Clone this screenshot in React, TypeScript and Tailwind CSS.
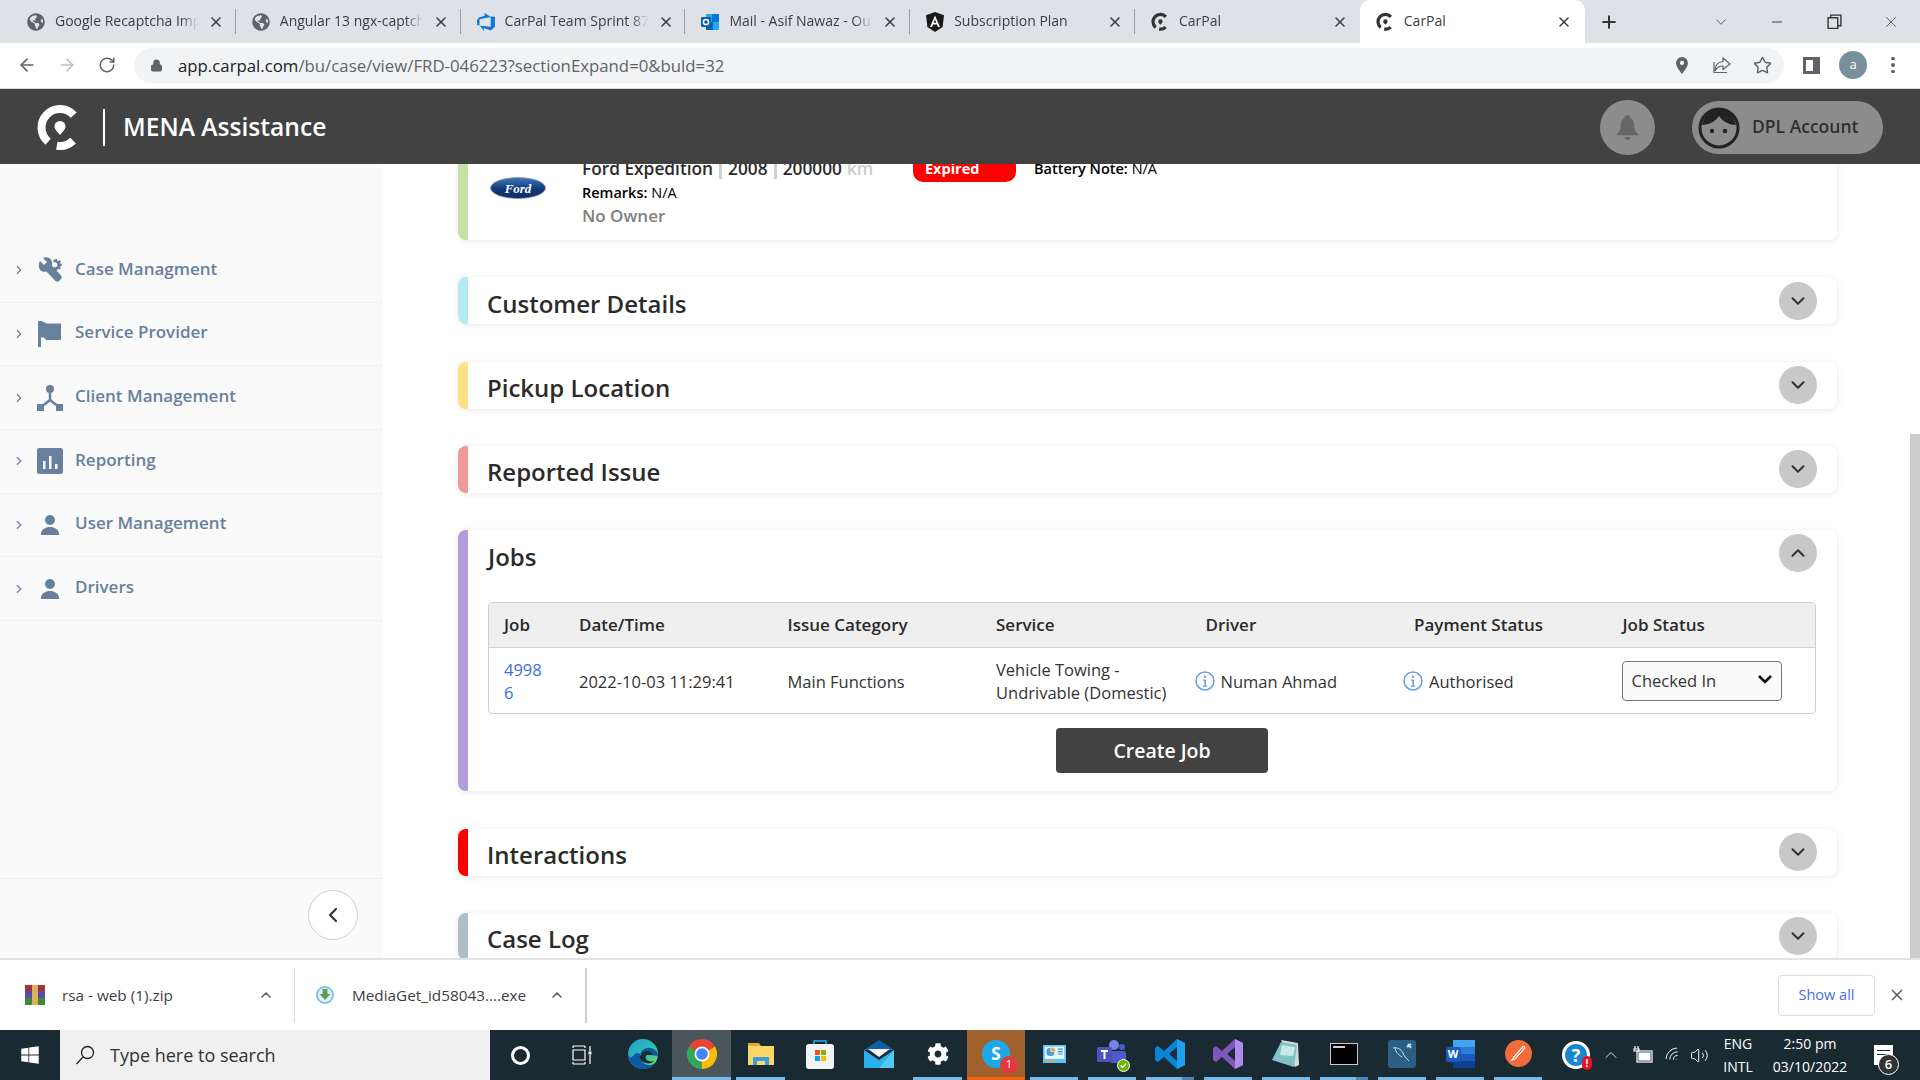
import React from "react";
import {
  ArrowLeft,
  ArrowRight,
  RotateCw,
  Lock,
  Star,
  X,
  Plus,
  ChevronDown,
  ChevronUp,
  ChevronRight,
  ChevronLeft,
  Minus,
  Wifi,
  Volume2,
} from "lucide-react";
import { FaGlobeAmericas, FaWindows, FaCog } from "react-icons/fa";

const CarpalLogo = ({ color, className }: { color: string; className: string }) => (
  <svg viewBox="14 10 50 54" className={className} fill="none">
    <path d="M53.7 24.1A18.5 18.5 0 1 0 28.1 50.7" stroke={color} strokeWidth="8" />
    <path d="M36.8 54.7A18.5 18.5 0 0 0 53.1 49.6" stroke={color} strokeWidth="8" />
    <path
      d="M40 30a5.5 5.5 0 0 1 5.5 5.5c0 3-3.5 6-5.5 8.5c-2-2.5-5.5-5.5-5.5-8.5a5.5 5.5 0 0 1 5.5-5.5z"
      fill={color}
    />
  </svg>
);

const Globe = () => <FaGlobeAmericas className="h-[18px] w-[18px] text-[#5f6368]" />;

const DevopsIcon = () => (
  <svg viewBox="0 0 19 19" className="h-[22px] w-[20px]">
    <path
      d="M18 4.500V14l-4 3.500-6.500-2.300V18L3.800 13.100l10.200.800V4.200zM14 4.700 8.200 1v2.500L2.800 5.200 1 7.500v4.600l2.300 1V6.800z"
      fill="#0f78d4"
    />
  </svg>
);

const OutlookIcon = () => (
  <svg viewBox="0 0 20 20" className="h-[20px] w-[20px]">
    <rect x="6" y="2" width="13" height="16" rx="1" fill="#28a8ea" />
    <rect x="12" y="2" width="7" height="8" fill="#0078d4" />
    <rect x="6" y="10" width="7" height="8" fill="#0364b8" />
    <rect x="1" y="5" width="10" height="10" rx="1" fill="#0f5fae" />
    <circle cx="6" cy="10" r="2.600" fill="none" stroke="#fff" strokeWidth="1.500" />
  </svg>
);

const AngularIcon = () => (
  <svg viewBox="0 0 20 20" className="h-[20px] w-[20px]">
    <path d="M10 0 19 3.300 17.600 15 10 20 2.400 15 1 3.300z" fill="#1a1a1a" />
    <path d="M10 3.500 5 15h2l1-2.600h4l1 2.600h2zM8.700 10.800 10 7.500l1.300 3.300z" fill="#fff" />
  </svg>
);

const tabs = [
  { title: "Google Recaptcha Implementation", icon: <Globe /> },
  { title: "Angular 13 ngx-captcha example", icon: <Globe /> },
  { title: "CarPal Team Sprint 87 Board", icon: <DevopsIcon /> },
  { title: "Mail - Asif Nawaz - Outlook", icon: <OutlookIcon /> },
  { title: "Subscription Plan", icon: <AngularIcon /> },
  { title: "CarPal", icon: <CarpalLogo color="#333333" className="h-[22px] w-[20px]" /> },
];

const TabStrip = () => (
  <div className="flex h-[43px] shrink-0 bg-[#dee1e6] pl-[11px] text-[14px] text-[#3c4043]">
    {tabs.map((tab, i) => (
      <div key={tab.title} className="flex h-full w-[224.800px] items-center pl-[15px]">
        <span className="flex w-[20px] shrink-0 items-center justify-center">{tab.icon}</span>
        <span className="mb-[2px] ml-[9px] w-[143px] overflow-hidden whitespace-nowrap [mask-image:linear-gradient(to_right,black_88%,transparent)]">
          {tab.title}
        </span>
        <X className="ml-[10px] h-[16px] w-[16px] shrink-0 text-[#3c4043]" strokeWidth={2.4} />
        {i < 5 && <span className="ml-auto h-[25px] w-px bg-[#9aa0a6]" />}
      </div>
    ))}
    <div className="flex h-full w-[225px] items-center rounded-t-[10px] bg-white pl-[15px]">
      <span className="flex w-[20px] shrink-0 items-center justify-center">
        <CarpalLogo color="#333333" className="h-[22px] w-[20px]" />
      </span>
      <span className="mb-[2px] ml-[9px] w-[143px]">CarPal</span>
      <X className="ml-[9px] h-[16px] w-[16px] shrink-0 text-[#3c4043]" strokeWidth={2.4} />
    </div>
    <Plus className="ml-[14px] mt-[12px] h-[20px] w-[20px] text-[#333]" strokeWidth={2.4} />
    <div className="flex flex-1 items-center justify-end text-[#333]">
      <ChevronDown className="h-[18px] w-[18px]" strokeWidth={1} />
      <Minus className="ml-[39px] h-[16px] w-[16px]" strokeWidth={1.4} />
      <svg viewBox="0 0 14 14" className="ml-[42px] h-[15px] w-[15px]" fill="none" stroke="#333" strokeWidth="1.300">
        <rect x="1" y="3.500" width="9" height="10" />
        <path d="M3.500 3.500V1H13V11H10" />
      </svg>
      <X className="ml-[40px] mr-[20px] h-[18px] w-[18px]" strokeWidth={1} />
    </div>
  </div>
);

const Toolbar = () => (
  <div className="flex h-[46px] shrink-0 items-center border-b border-[#dadce0] bg-white pb-px">
    <ArrowLeft className="ml-[17px] h-[20px] w-[20px] text-[#5f6368]" />
    <ArrowRight className="ml-[20px] h-[20px] w-[20px] text-[#bcbfc3]" />
    <RotateCw className="ml-[21px] h-[18px] w-[18px] text-[#5f6368]" />
    <div className="ml-[18px] flex h-[35px] w-[1650px] items-center rounded-full bg-[#f1f3f4] pl-[16px]">
      <Lock className="h-[13px] w-[13px] fill-[#5f6368] text-[#5f6368]" />
      <span className="ml-[15px] pt-[1px] text-[16.800px] text-[#5f6368]">
        <span className="text-[#202124]">app.carpal.com</span>/bu/case/view/FRD-046223?sectionExpand=0&amp;buld=32
      </span>
      <svg viewBox="0 0 14 20" className="ml-auto h-[17px] w-[12px]">
        <path d="M7 0a7 7 0 0 1 7 7c0 4-4 9-7 13C4 16 0 11 0 7a7 7 0 0 1 7-7z" fill="#5f6368" />
        <circle cx="7" cy="7" r="2.500" fill="#f1f3f4" />
      </svg>
      <svg viewBox="0 0 20 20" className="ml-[24px] h-[20px] w-[20px]" fill="none" stroke="#5f6368" strokeWidth="1.200">
        <path d="M11 3l7 6-7 5.500v-3.500c-4 0-6 1-8 5 0-6 3-9 8-9.500z" />
        <path d="M2 7v10.500h13" />
      </svg>
      <Star className="ml-[21px] mr-[12px] h-[19px] w-[19px] text-[#5f6368]" strokeWidth={1.800} />
    </div>
    <span className="ml-[19px] flex h-[17px] w-[17px] justify-start border-[3px] border-[#5f6368] border-r-[7px]" />
    <span className="ml-[19px] flex h-[28px] w-[28px] items-center justify-center rounded-full bg-[#78909c] text-[13px] text-white">
      a
    </span>
    <span className="ml-[24px] flex flex-col gap-[3px]">
      <span className="h-[3.500px] w-[3.500px] rounded-full bg-[#5f6368]" />
      <span className="h-[3.500px] w-[3.500px] rounded-full bg-[#5f6368]" />
      <span className="h-[3.500px] w-[3.500px] rounded-full bg-[#5f6368]" />
    </span>
  </div>
);

const AppHeader = () => (
  <header className="flex h-[75px] shrink-0 items-center bg-[#424242] pl-[34px] pt-[2px]">
    <CarpalLogo color="#ffffff" className="h-[54px] w-[50px]" />
    <span className="ml-[19px] h-[37px] w-[2px] bg-white" />
    <span className="ml-[18px] text-[24.600px] font-semibold text-white">MENA Assistance</span>
    <span className="ml-auto flex h-[55px] w-[55px] items-center justify-center rounded-full bg-[#8c8c8c]">
      <svg viewBox="0 0 26 28" className="h-[27px] w-[25px]" fill="#666666">
        <path d="M13 1c2 0 3 1.500 3 3 3 1.500 4 4 4 8 0 4 1 7 4 8.500v1.500H2v-1.500c3-1.500 4-4.500 4-8.500 0-4 1-6.500 4-8 0-1.500 1-3 3-3z" />
        <path d="M10 24h6c0 2-1.500 3-3 3s-3-1-3-3z" />
      </svg>
    </span>
    <div className="ml-[37px] mr-[37px] flex h-[53px] w-[191px] items-center rounded-full bg-[#8c8c8c] pl-[6px]">
      <svg viewBox="0 0 42 42" className="h-[42px] w-[42px]">
        <circle cx="21" cy="21" r="19" fill="#8c8c8c" stroke="#222" strokeWidth="3" />
        <path d="M4 18C7 6 14 2 21 2s14 4 17 16c-6 0-13-3-17-9-3 5-10 9-17 9z" fill="#222" />
        <circle cx="14" cy="24" r="2.200" fill="#222" />
        <circle cx="27" cy="24" r="2.200" fill="#222" />
      </svg>
      <span className="mb-[2px] ml-[12px] text-[17.500px] font-semibold text-[#2f2f2f]">DPL Account</span>
    </div>
  </header>
);

const navIconClass = "h-[26px] w-[26px] text-[#67809c]";

const navItems = [
  {
    label: "Case Managment",
    icon: (
      <svg viewBox="0 0 26 26" className={navIconClass} fill="currentColor">
        <path d="M3 4l4 4 3-3-4-4c3-1.500 7-.500 8.500 2.500 1 2 .800 3.500.300 5L24 18.500c1 1 1 2.500 0 3.500l-2 2c-1 1-2.500 1-3.500 0L9.500 14.500C8 15 6 15 4.500 14 1.500 12.500 1 7 3 4z" />
        <path d="M19 2l1 .100.300 1.400 1 .400 1.200-.700 1.300 1.300-.700 1.200.400 1 1.400.300v1.800l-1.400.300-.400 1 .700 1.200-1.300 1.300-1.200-.700-1 .400-.300 1.400h-1l-2.500-2.500 .900-1.200c1.500.500 3-.500 3-2.300s-1.700-2.800-3.200-2.200l-1-1 .300-.400-.200-1.200z" />
      </svg>
    ),
  },
  {
    label: "Service Provider",
    icon: (
      <svg viewBox="0 0 26 26" className={navIconClass} fill="currentColor">
        <path d="M1 0h3.500l5 2.500H24V19H9l-2-2.500H4V26H1z" />
      </svg>
    ),
  },
  {
    label: "Client Management",
    icon: (
      <svg viewBox="0 0 26 26" className={navIconClass} fill="currentColor">
        <circle cx="13" cy="4" r="4" />
        <rect x="0" y="19" width="7" height="7" />
        <rect x="19" y="19" width="7" height="7" />
        <path d="M13 8v7M13 15 4 22M13 15l9 7" stroke="currentColor" strokeWidth="2.500" fill="none" />
      </svg>
    ),
  },
  {
    label: "Reporting",
    icon: (
      <svg viewBox="0 0 26 26" className={navIconClass}>
        <rect width="26" height="26" rx="2.500" fill="currentColor" />
        <path d="M6 13h2.500v8H6zM12 8h2.500v13H12zM18 16h2.500v5H18z" fill="#fafafa" />
      </svg>
    ),
  },
  {
    label: "User Management",
    icon: (
      <svg viewBox="0 0 26 26" className={navIconClass} fill="currentColor">
        <circle cx="13" cy="8" r="5" />
        <path d="M4 22c0-5 5-7 9-7s9 2 9 7v1H4z" />
      </svg>
    ),
  },
  {
    label: "Drivers",
    icon: (
      <svg viewBox="0 0 26 26" className={navIconClass} fill="currentColor">
        <circle cx="13" cy="8" r="5" />
        <path d="M4 22c0-5 5-7 9-7s9 2 9 7v1H4z" />
      </svg>
    ),
  },
];

const Sidebar = () => (
  <aside className="flex h-full w-[383px] shrink-0 flex-col bg-[#fafafa] pt-[75px]">
    <nav>
      {navItems.map((item) => (
        <div key={item.label} className="flex h-[63.700px] items-center border-b border-[#f2f2f2] pl-[12px]">
          <ChevronRight className="h-[14px] w-[14px] text-[#67809c]" />
          <span className="ml-[11px]">{item.icon}</span>
          <span className="mb-[4px] ml-[12px] text-[17px] font-semibold text-[#67809c]">{item.label}</span>
        </div>
      ))}
    </nav>
    <div className="mt-auto flex h-[80px] items-start justify-end border-t border-[#efefef] pr-[25px] pt-[11px]">
      <span className="flex h-[50px] w-[50px] items-center justify-center rounded-full border border-[#cfcfcf] bg-white">
        <ChevronLeft className="h-[24px] w-[24px] text-[#333]" strokeWidth={2.200} />
      </span>
    </div>
  </aside>
);

const CollapseToggle = ({ open }: { open?: boolean }) => (
  <span className="flex h-[38px] w-[38px] shrink-0 items-center justify-center rounded-full bg-[#c8c8c8]">
    {open ? (
      <ChevronUp className="h-[22px] w-[22px] text-[#333]" strokeWidth={2.200} />
    ) : (
      <ChevronDown className="h-[22px] w-[22px] text-[#333]" strokeWidth={2.200} />
    )}
  </span>
);

const cardClass = "rounded-lg border-l-[10px] bg-white shadow-[0_1px_7px_rgba(0,0,0,0.09)]";

const SectionCard = ({ title, accent }: { title: string; accent: string }) => (
  <section className={`${cardClass} ${accent} flex h-[47px] shrink-0 items-center justify-between pl-[19px] pr-[20px]`}>
    <h2 className="mt-[6px] text-[24px] font-semibold leading-none text-[#2b2b2b]">{title}</h2>
    <CollapseToggle />
  </section>
);

const VehicleCard = () => (
  <section className={`${cardClass} flex h-[116px] shrink-0 border-[#c5e1a5] pl-[22px]`}>
    <svg viewBox="0 0 56 22" className="mt-[53px] h-[22px] w-[56px] shrink-0">
      <defs>
        <linearGradient id="fordBlue" x1="0" y1="0" x2="0" y2="1">
          <stop offset="0" stopColor="#3f78b8" />
          <stop offset="0.55" stopColor="#123a7c" />
          <stop offset="1" stopColor="#0d2b5e" />
        </linearGradient>
      </defs>
      <ellipse cx="28" cy="11" rx="27.500" ry="10.500" fill="url(#fordBlue)" stroke="#8b9bb4" strokeWidth="0.800" />
      <text x="28" y="15.500" textAnchor="middle" fontFamily="'Liberation Serif',serif" fontStyle="italic" fontWeight="700" fontSize="13" fill="#ffffff">
        Ford
      </text>
    </svg>
    <div className="ml-[36px] pt-[33px]">
      <div className="flex h-[24px] items-center">
        <span className="flex w-[331px] items-center text-[17.300px] font-semibold text-[#2b2b2b]">
          Ford Expedition
          <span className="mx-[6px] h-[20px] w-[3px] bg-[#d0d0d0]" />
          2008
          <span className="mx-[6px] h-[20px] w-[3px] bg-[#d0d0d0]" />
          200000
          <span className="ml-[5px] text-[#cccccc]">km</span>
        </span>
        <span className="flex h-[26px] w-[103px] items-center rounded-[10px] bg-[#ff0000] pl-[12px] text-[14.500px] font-bold text-white">
          Expired
        </span>
        <span className="ml-[18px] text-[14.500px] font-semibold text-black">
          Battery Note: <span className="font-normal">N/A</span>
        </span>
      </div>
      <div className="flex h-[23px] items-center text-[14.500px] font-semibold text-black">
        Remarks:&nbsp;<span className="font-normal">N/A</span>
      </div>
      <div className="flex h-[24px] items-center text-[17px] font-semibold text-[#808080]">No Owner</div>
    </div>
  </section>
);

const InfoDot = () => (
  <svg viewBox="0 0 20 20" className="h-[20px] w-[20px] shrink-0">
    <circle cx="10" cy="10" r="9" fill="none" stroke="#6a9fe8" strokeWidth="1.500" />
    <circle cx="10" cy="5.800" r="1.200" fill="#6a9fe8" />
    <path d="M8 8.500h3v6h1.300v1.200H7.800v-1.200H9.300v-4.800H8z" fill="#6a9fe8" />
  </svg>
);

const jobColumns = ["Job", "Date/Time", "Issue Category", "Service", "Driver", "Payment Status", "Job Status"];

const JobsCard = () => (
  <section className={`${cardClass} h-[261px] shrink-0 border-[#b39ddb] pl-[20px] pr-[21px]`}>
    <div className="flex h-[72px] items-start justify-between">
      <h2 className="mt-[12px] text-[24px] font-semibold leading-[30px] text-[#2b2b2b]">Jobs</h2>
      <span className="mr-[-1px] mt-[4px]">
        <CollapseToggle open />
      </span>
    </div>
    <div className="overflow-hidden rounded-[4px] border border-[#cfcfcf]">
      <table className="w-full table-fixed text-[16.500px] text-[#333]">
        <colgroup>
          <col className="w-[75px]" />
        </colgroup>
        <thead>
          <tr className="h-[44px] border-b border-[#cfcfcf] bg-[#efefef]">
            {jobColumns.map((col, i) => (
              <th key={col} className={`${i < 4 ? "pl-[15px]" : "pl-[16px]"} text-left text-[17px] font-semibold text-[#2b2b2b]`}>
                {col}
              </th>
            ))}
          </tr>
        </thead>
        <tbody>
          <tr className="h-[66px] leading-[23px]">
            <td className="break-all pl-[15px] pr-[15px] pt-[1px] text-[#3b6fd8]">49986</td>
            <td className="pl-[15px] pt-[1px]">2022-10-03 11:29:41</td>
            <td className="pl-[15px] pt-[1px]">Main Functions</td>
            <td className="pl-[15px] pr-[2px] pt-[1px]">Vehicle Towing - Undrivable (Domestic)</td>
            <td className="pl-[5px] pt-[1px]">
              <span className="flex items-center gap-[6px]">
                <InfoDot />
                Numan Ahmad
              </span>
            </td>
            <td className="pl-[5px] pt-[1px]">
              <span className="flex items-center gap-[6px]">
                <InfoDot />
                Authorised
              </span>
            </td>
            <td className="pl-[15px]">
              <span className="flex h-[40px] w-[160px] items-center justify-between rounded-[4px] border border-[#767676] bg-[#fafafa] pl-[9px] pr-[9px]">
                Checked In
                <svg viewBox="0 0 14 9" className="mb-[3px] h-[9px] w-[14px]" fill="none" stroke="#111" strokeWidth="2.600">
                  <path d="M1 1l6 6 6-6" />
                </svg>
              </span>
            </td>
          </tr>
        </tbody>
      </table>
    </div>
    <button className="ml-[568px] mt-[14px] flex h-[45px] w-[212px] items-center justify-center rounded-[4px] bg-[#424242] text-[19.500px] font-semibold text-white">
      Create Job
    </button>
  </section>
);

const MainPanel = () => (
  <main className="flex h-full flex-1 overflow-hidden">
    <div className="-mt-[40px] flex w-[1527px] flex-col gap-[37.330px] pl-[75px] pr-[73px]">
      <VehicleCard />
      <SectionCard title="Customer Details" accent="border-[#b2ebf2]" />
      <SectionCard title="Pickup Location" accent="border-[#ffe082]" />
      <SectionCard title="Reported Issue" accent="border-[#ef9a9a]" />
      <JobsCard />
      <SectionCard title="Interactions" accent="border-[#ff0000]" />
      <SectionCard title="Case Log" accent="border-[#b0bec5]" />
    </div>
    <div className="w-[10px] pt-[270px]">
      <div className="h-full bg-[#cdcdcd]" />
    </div>
  </main>
);

const DownloadBar = () => (
  <div className="flex h-[72px] shrink-0 items-center border-t-2 border-[#e3e3e3] bg-white text-[15.300px] text-[#3c4043]">
    <div className="flex h-[55px] w-[295px] items-center border-r border-[#dadce0] pl-[25px]">
      <svg viewBox="0 0 20 20" className="h-[20px] w-[20px]">
        <rect x="0" y="0" width="20" height="6" fill="#a5303d" />
        <rect x="0" y="6" width="20" height="7" fill="#5d4aa8" />
        <rect x="0" y="13" width="20" height="7" fill="#3d8a3d" />
        <rect x="7" y="0" width="6" height="20" fill="#d9b25a" />
      </svg>
      <span className="ml-[17px] w-[196px]">rsa - web (1).zip</span>
      <ChevronUp className="h-[16px] w-[16px] text-[#5f6368]" strokeWidth={2.400} />
    </div>
    <div className="flex h-[55px] w-[292px] items-center border-r-2 border-[#cfcfcf] pl-[20px]">
      <svg viewBox="0 0 20 20" className="h-[20px] w-[20px]">
        <circle cx="10" cy="10" r="8" fill="#e8f4fb" stroke="#7ec4ea" strokeWidth="2" />
        <path d="M7.500 4h5v5h3l-5.500 6-5.500-6h3z" fill="#5f9e4a" />
      </svg>
      <span className="ml-[17px] w-[197px] whitespace-nowrap">MediaGet_id58043....exe</span>
      <ChevronUp className="h-[16px] w-[16px] text-[#5f6368]" strokeWidth={2.400} />
    </div>
    <span className="ml-auto flex h-[41px] w-[97px] items-center justify-center rounded-[4px] border border-[#dadce0] text-[14.500px] text-[#4a6ee0]">
      Show all
    </span>
    <X className="ml-[13px] mr-[14px] h-[18px] w-[18px] text-[#5f6368]" strokeWidth={2.200} />
  </div>
);

type Slot = { key: string; bar?: "on" | "double"; tint?: string; node: React.ReactNode };

const taskSlots: Slot[] = [
  {
    key: "edge",
    node: (
      <svg viewBox="0 0 30 30" className="h-[30px] w-[30px]">
        <defs>
          <linearGradient id="edgeA" x1="0" y1="0" x2="1" y2="1">
            <stop offset="0" stopColor="#1b9de2" />
            <stop offset="0.6" stopColor="#35c1a5" />
            <stop offset="1" stopColor="#7fdc5e" />
          </linearGradient>
        </defs>
        <circle cx="15" cy="15" r="15" fill="url(#edgeA)" />
        <path d="M30 17c0-5-5-9-11-8-4 .600-7 4-7 8 0 5 4 9 9 9 2 0 4-.500 6-2-3 4-7 6-12 6-8 0-15-7-15-15 3 7 5 1 8-1" fill="#0c59a4" />
        <path d="M12 17c1-3 4-5 7-5 3 0 5 1.500 6 4l-6 0c-1 .500-2 2-1 4 1 2 5 3 8 2-2 2-5 3-8 2-4-1-7-4-6-7z" fill="#1b2a33" />
      </svg>
    ),
  },
  {
    key: "chrome",
    bar: "on",
    tint: "bg-[#4a555c]",
    node: (
      <svg viewBox="0 0 30 30" className="h-[30px] w-[30px]">
        <path d="M15 15L2 7.500A15 15 0 0 1 28 7.500Z" fill="#ea4335" />
        <path d="M15 15L28 7.500A15 15 0 0 1 15 30Z" fill="#fbbc04" />
        <path d="M15 15L15 30A15 15 0 0 1 2 7.500Z" fill="#34a853" />
        <circle cx="15" cy="15" r="7.500" fill="#fff" />
        <circle cx="15" cy="15" r="5.800" fill="#4285f4" />
      </svg>
    ),
  },
  {
    key: "explorer",
    bar: "on",
    node: (
      <svg viewBox="0 0 28 24" className="h-[24px] w-[28px]">
        <path d="M1 1h11l2 3h13v19H1z" fill="#e0a92f" />
        <rect x="1" y="4" width="26" height="19" fill="#fbd768" />
        <path d="M6 23v-8h16v8h-4v-4h-8v4z" fill="#3d9be0" />
      </svg>
    ),
  },
  {
    key: "store",
    node: (
      <svg viewBox="0 0 28 30" className="h-[30px] w-[28px]">
        <path d="M8 6V2h12v4" fill="none" stroke="#29a9ea" strokeWidth="1.600" />
        <rect x="0" y="5" width="28" height="25" rx="3" fill="#f3f3f3" />
        <rect x="9" y="11" width="5" height="5" fill="#f25022" />
        <rect x="15" y="11" width="5" height="5" fill="#7fba00" />
        <rect x="9" y="17" width="5" height="5" fill="#00a4ef" />
        <rect x="15" y="17" width="5" height="5" fill="#ffb900" />
      </svg>
    ),
  },
  {
    key: "mail",
    node: (
      <svg viewBox="0 0 30 28" className="h-[28px] w-[30px]">
        <path d="M15 0 30 10H0z" fill="#0f5ea8" />
        <path d="M4 9h22l-11 8z" fill="#f4f4f4" />
        <path d="M0 10l15 10 15-10v18H0z" fill="#29b1ee" />
        <path d="M30 10v18H15z" fill="#52c8f5" />
      </svg>
    ),
  },
  {
    key: "settings",
    bar: "on",
    node: <FaCog className="h-[22px] w-[22px] text-white" />,
  },
  {
    key: "skype",
    tint: "bg-[#a0622d]",
    node: (
      <span className="relative flex h-[28px] w-[28px] items-center justify-center rounded-full bg-[#1fa8e8] text-[17px] font-bold text-white">
        S
        <span className="absolute -bottom-[6px] -right-[8px] flex h-[18px] w-[18px] items-center justify-center rounded-full bg-[#e5383b] text-[11px] font-normal">
          1
        </span>
      </span>
    ),
  },
  {
    key: "control",
    bar: "on",
    node: (
      <svg viewBox="0 0 28 22" className="h-[18px] w-[27px]">
        <rect width="28" height="22" fill="#5cc5f2" />
        <rect x="2" y="2" width="24" height="15" fill="#e8f6fd" />
        <path d="M9 3.500a5 5 0 1 0 5 5H9z" fill="#4b9ad6" />
        <path d="M10 3a5 5 0 0 1 5 5h-5z" fill="#f0a92f" />
        <path d="M18 5h6M18 8h6M18 11h6" stroke="#2f86c9" strokeWidth="1.500" />
        <rect x="3" y="18.500" width="12" height="1.500" fill="#f0a92f" />
      </svg>
    ),
  },
  {
    key: "teams",
    bar: "on",
    node: (
      <span className="relative flex h-[26px] w-[30px] items-center">
        <svg viewBox="0 0 30 28" className="h-[28px] w-[30px]">
          <circle cx="17" cy="5" r="5" fill="#7b83eb" />
          <circle cx="25" cy="7" r="3" fill="#5059c9" />
          <rect x="13" y="11" width="16" height="12" rx="2" fill="#5059c9" />
          <rect x="0" y="7" width="15" height="15" rx="1.500" fill="#4b53bc" />
          <path d="M4 10h7v2H8.500v7h-2v-7H4z" fill="#fff" />
        </svg>
        <span className="absolute -bottom-[5px] -right-[3px] flex h-[13px] w-[13px] items-center justify-center rounded-full border border-white bg-[#6bb700]">
          <svg viewBox="0 0 10 10" className="h-[9px] w-[9px]" fill="none" stroke="#fff" strokeWidth="1.800">
            <path d="M2 5l2 2 4-4" />
          </svg>
        </span>
      </span>
    ),
  },
  {
    key: "vscode",
    bar: "double",
    node: (
      <svg viewBox="0 0 30 30" className="h-[30px] w-[30px]">
        <path d="M22 0l8 4v22l-8 4L9 18l-6 5-3-2V9l3-2 6 5z" fill="#0a84d6" />
        <path d="M22 0l8 4v22l-8 4z" fill="#1fa0ec" />
        <path d="M22 8l-8 7 8 7z" fill="#1b2a33" />
      </svg>
    ),
  },
  {
    key: "vstudio",
    bar: "on",
    node: (
      <svg viewBox="0 0 30 30" className="h-[30px] w-[30px]">
        <path d="M22 0l8 4v22l-8 4L9 18l-6 5-3-2V9l3-2 6 5z" fill="#7e57b8" />
        <path d="M22 0l8 4v22l-8 4z" fill="#b18bea" />
        <path d="M22 8l-8 7 8 7z" fill="#1b2a33" />
      </svg>
    ),
  },
  {
    key: "notepad",
    bar: "on",
    node: (
      <svg viewBox="0 0 28 28" className="h-[28px] w-[28px]">
        <path d="M9 0 26 3l1 22-4 2z" fill="#d9d9d9" />
        <path d="M9 2 25 5l-3 22L0 20z" fill="#7fc3c9" />
        <path d="M10 5 23 7l-2 9-13-1z" fill="#c9e8ea" />
      </svg>
    ),
  },
  {
    key: "cmd",
    bar: "double",
    node: (
      <span className="flex h-[22px] w-[28px] flex-col border border-[#c9c9c9] bg-black">
        <span className="ml-[2px] mt-[2px] h-[2px] w-[12px] bg-[#cfcfcf]" />
      </span>
    ),
  },
  {
    key: "mysql",
    bar: "on",
    node: (
      <span className="flex h-[28px] w-[28px] items-center justify-center rounded-[3px] bg-[#2c5f85]">
        <svg viewBox="0 0 24 24" className="h-[24px] w-[24px]" fill="none" stroke="#cfe0ec" strokeWidth="1">
          <path d="M3 6c4-1 8 1 10 5 1 3 3 5 6 8M5 6c1 5 4 7 7 9" />
          <path d="M17 5l4-3M18 2l3 4" strokeWidth="2" />
        </svg>
      </span>
    ),
  },
  {
    key: "word",
    bar: "on",
    node: (
      <span className="relative flex h-[28px] w-[29px] justify-end">
        <span className="flex w-[22px] flex-col">
          <span className="h-[7px] bg-[#41a5ee]" />
          <span className="h-[7px] bg-[#2b7cd3]" />
          <span className="h-[7px] bg-[#185abd]" />
          <span className="h-[7px] bg-[#103f91]" />
        </span>
        <span className="absolute left-0 top-[7px] flex h-[15px] w-[15px] items-center justify-center rounded-[2px] bg-[#185abd] text-[11px] font-bold text-white">
          W
        </span>
      </span>
    ),
  },
  {
    key: "pen",
    bar: "on",
    node: (
      <svg viewBox="0 0 28 28" className="h-[27px] w-[27px]">
        <circle cx="14" cy="14" r="14" fill="#f26b3a" />
        <path d="M7 21l3-1 10-11c1-1 0-3-1.500-2L9 18z" fill="none" stroke="#fff" strokeWidth="1.200" />
      </svg>
    ),
  },
];

const Taskbar = () => (
  <div className="flex h-[50px] shrink-0 items-stretch bg-[#1a2a33] text-white">
    <div className="flex w-[60px] items-center justify-center">
      <FaWindows className="h-[20px] w-[20px]" />
    </div>
    <div className="flex w-[430px] items-center bg-[#f0f0f0] pl-[15px] text-[18px] text-[#333]">
      <svg viewBox="0 0 20 20" className="h-[20px] w-[20px]" fill="none" stroke="#222" strokeWidth="1.300">
        <circle cx="12.500" cy="7.500" r="6" />
        <path d="M8 12l-6.500 7" />
      </svg>
      <span className="ml-[15px]">Type here to search</span>
    </div>
    <div className="flex w-[60px] items-center justify-center">
      <span className="h-[19px] w-[19px] rounded-full border-[3px] border-white" />
    </div>
    <div className="flex w-[63px] items-center justify-center">
      <svg viewBox="0 0 20 20" className="h-[20px] w-[20px]" fill="none" stroke="#fff" strokeWidth="1.200">
        <path d="M1 1h12M1 19h12M1 5h12v10H1zM1 1v2M13 1v2M1 17v2M13 17v2M18 1v5M18 10v9" />
        <rect x="16.500" y="6.500" width="3" height="3" fill="#fff" stroke="none" />
      </svg>
    </div>
    {taskSlots.map((slot, i) => (
      <div key={slot.key} className={`flex ${i < 6 ? "w-[59px]" : "w-[58px]"} flex-col ${slot.tint ?? ""}`}>
        <div className="flex flex-1 items-center justify-center">{slot.node}</div>
        {slot.key === "skype" ? (
          <div className="h-[3px] bg-[#f7630c]" />
        ) : slot.key === "chrome" ? (
          <div className="h-[3px] bg-[#76b9ed]" />
        ) : slot.bar === "double" ? (
          <div className="mx-[5px] flex h-[3px]">
            <span className="w-[36px] bg-[#76b9ed]" />
            <span className="flex-1 bg-[#4f86b0]" />
          </div>
        ) : slot.bar === "on" ? (
          <div className="mx-[5px] h-[3px] bg-[#76b9ed]" />
        ) : (
          <div className="h-[3px]" />
        )}
      </div>
    ))}
    <div className="flex flex-1 items-center text-[14px] leading-[23px]">
      <span className="relative ml-[15px] flex h-[28px] w-[28px] items-center justify-center rounded-full border-[3px] border-white bg-[#1a86d0] text-[18px] font-bold">
        ?
        <span className="absolute -bottom-[4px] -right-[5px] flex h-[14px] w-[10px] items-center justify-center rounded-full bg-[#e81123] text-[10px]">
          !
        </span>
      </span>
      <ChevronUp className="ml-[11px] h-[20px] w-[20px]" strokeWidth={1} />
      <svg viewBox="0 0 20 20" className="ml-[12px] h-[20px] w-[20px]" fill="none" stroke="#fff" strokeWidth="1.200">
        <rect x="4" y="6" width="15" height="11" />
        <rect x="6" y="8" width="11" height="7" fill="#fff" />
        <path d="M2 1v3M5 1v3M1 4h5v2H1z" />
      </svg>
      <Wifi className="ml-[11px] h-[18px] w-[18px] -rotate-45" strokeWidth={1.200} />
      <Volume2 className="ml-[8px] h-[19px] w-[19px]" strokeWidth={1.200} />
      <div className="ml-[9px] w-[40px] text-center">
        <div>ENG</div>
        <div>INTL</div>
      </div>
      <div className="ml-[6px] w-[92px] text-center">
        <div>2:50 pm</div>
        <div>03/10/2022</div>
      </div>
      <span className="relative ml-[18px] h-[20px] w-[19px] bg-white">
        <span className="mx-[3px] mt-[5px] block h-px bg-[#1a2a33]" />
        <span className="mx-[3px] mt-[3px] block h-px bg-[#1a2a33]" />
        <span className="absolute -bottom-[10px] -right-[6px] flex h-[21px] w-[21px] items-center justify-center rounded-full border border-white bg-[#333] text-[13px] font-semibold">
          6
        </span>
      </span>
    </div>
  </div>
);

export default function App() {
  return (
    <div className="flex h-screen flex-col overflow-hidden bg-white font-['Open_Sans',sans-serif]">
      <TabStrip />
      <Toolbar />
      <AppHeader />
      <div className="flex min-h-0 flex-1">
        <Sidebar />
        <MainPanel />
      </div>
      <DownloadBar />
      <Taskbar />
    </div>
  );
}
